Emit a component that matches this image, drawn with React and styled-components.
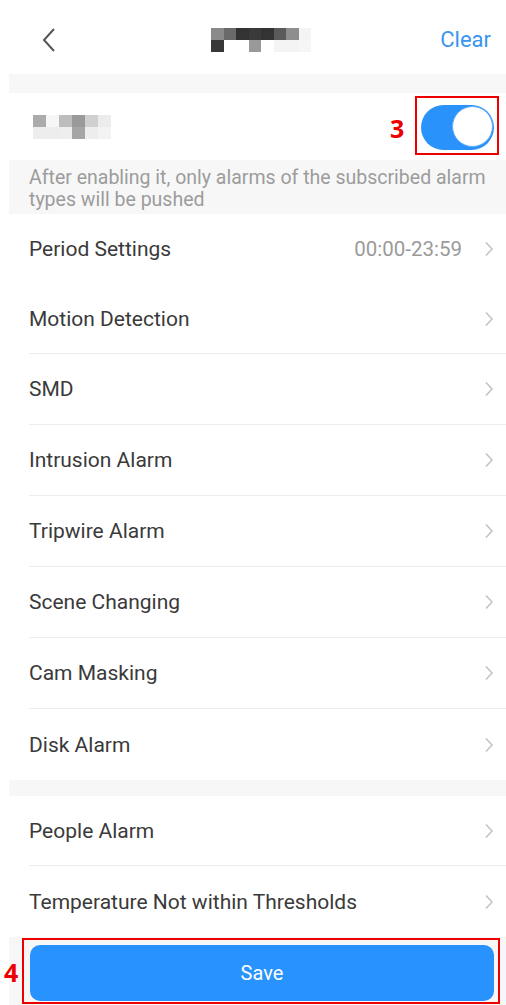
import React from 'react'
import styled, { createGlobalStyle } from 'styled-components'

const Global = createGlobalStyle`
  html, body {
    margin: 0;
    padding: 0;
    background: #ffffff;
    font-family: Roboto, "Noto Sans", sans-serif;
  }
`

const Page = styled.div`
  width: 506px;
  height: 1005px;
  position: relative;
  overflow: hidden;
  background: #fff;
`

const Header = styled.div`
  height: 74px;
  display: flex;
  align-items: center;
  justify-content: space-between;
  padding: 8px 15px 0 42px;
  box-sizing: border-box;
  position: relative;
`

const BackButton = styled.div`
  width: 20px;
  height: 28px;
  display: flex;
  align-items: center;
  margin-top: -2px;
`

const ClearLink = styled.span`
  color: #3a95ee;
  font-size: 22px;
  margin-top: -4px;
`

const Mosaic = styled.div`
  display: grid;
  grid-template-columns: repeat(${p => p.$cols}, ${p => p.$cell}px);
  grid-auto-rows: ${p => p.$row}px;
`

const HeaderMosaic = styled(Mosaic)`
  position: absolute;
  left: 211px;
  top: 28px;
`

const Cell = styled.div`
  background: ${p => p.$c};
`

const Body = styled.div`
  margin-left: 9px;
`

const Gap = styled.div`
  height: ${p => p.$h}px;
  background: #f7f7f7;
`

const ToggleRow = styled.div`
  height: 67px;
  display: flex;
  align-items: center;
  justify-content: space-between;
  padding: 0 12px 0 24px;
  background: #fff;
`

const Toggle = styled.div`
  width: 73px;
  height: 45px;
  border-radius: 23px;
  background: #2a93fb;
  position: relative;
  margin-bottom: -1px;
`

const Knob = styled.div`
  position: absolute;
  right: 1px;
  top: 1px;
  width: 41px;
  height: 41px;
  border-radius: 50%;
  background: #fff;
  border: 1px solid #5aaaf7;
  box-sizing: border-box;
`

const Note = styled.div`
  background: #f7f7f7;
  color: #9c9c9c;
  font-size: 19.5px;
  line-height: 22px;
  padding: 7px 10px 10px 20px;
  height: 54px;
  box-sizing: border-box;
`

const List = styled.div`
  background: #fff;
`

const Row = styled.div`
  height: ${p => p.$h || 71}px;
  display: flex;
  align-items: center;
  margin-left: 20px;
  padding-right: 12px;
  border-bottom: ${p => (p.$line ? '1px solid #ececec' : 'none')};
  box-sizing: border-box;
`

const Label = styled.span`
  flex: 1;
  font-size: 21px;
  color: #3a3a3a;
`

const Value = styled.span`
  font-size: 20.5px;
  color: #9a9a9a;
  margin-right: 22px;
`

const Chevron = styled.svg`
  width: 10px;
  height: 16px;
`

const Footer = styled.div`
  background: #f7f7f7;
  height: 69px;
  padding: 8px 12px 0 21px;
  box-sizing: border-box;
`

const SaveButton = styled.div`
  height: 56px;
  border-radius: 10px;
  background: #2892fe;
  color: #fff;
  font-size: 20px;
  display: flex;
  align-items: center;
  justify-content: center;
`

const Marker = styled.div`
  position: absolute;
  left: ${p => p.$x}px;
  top: ${p => p.$y}px;
  width: ${p => p.$w}px;
  height: ${p => p.$h}px;
  border: 2px solid #ee0000;
  box-sizing: border-box;
`

const MarkerNum = styled.span`
  position: absolute;
  left: ${p => p.$x}px;
  top: ${p => p.$y}px;
  color: #ee0000;
  font-family: "Open Sans", "Liberation Sans", sans-serif;
  font-weight: 700;
  font-size: 25px;
  line-height: 1;
`

const Arrow = () => (
  <Chevron viewBox="0 0 10 16">
    <polyline points="2,1.5 8,8 2,14.5" fill="none" stroke="#c4c4c4" strokeWidth="1.6" />
  </Chevron>
)

const headerCells = [
  '#8a8a8a', '#6a6a6a', '#333', '#3a3a3a', '#333', '#5a5a5a', '#8e8e8e', '#f4f4f4',
  '#383838', '#fff', '#fff', '#999', '#fff', '#f4f4f4', '#f4f4f4', '#f6f6f6'
]

const titleCells = [
  '#ababab', '#f6f6f6', '#bdbdbd', '#9a9a9a', '#d0d0d0', '#ececec',
  '#ededed', '#ededed', '#eeeeee', '#a5a5a5', '#ededed', '#f3f3f3'
]

const rows = [
  { label: 'Period Settings', value: '00:00-23:59', line: false, h: 70 },
  { label: 'Motion Detection', line: true, h: 70 },
  { label: 'SMD', line: true },
  { label: 'Intrusion Alarm', line: true },
  { label: 'Tripwire Alarm', line: true },
  { label: 'Scene Changing', line: true },
  { label: 'Cam Masking', line: true },
  { label: 'Disk Alarm', line: false, h: 71 }
]

const rows2 = [
  { label: 'People Alarm', line: true, h: 70 },
  { label: 'Temperature Not within Thresholds', line: false, h: 71 }
]

export default function App() {
  return (
    <Page>
      <Global />
      <Header>
        <BackButton>
          <svg width="14" height="26" viewBox="0 0 14 26">
            <polyline points="12,2 2,13 12,24" fill="none" stroke="#555" strokeWidth="2" />
          </svg>
        </BackButton>
        <HeaderMosaic $cols={8} $cell={12.5} $row={12}>
          {headerCells.map((c, i) => <Cell key={i} $c={c} />)}
        </HeaderMosaic>
        <ClearLink>Clear</ClearLink>
      </Header>
      <Body>
        <Gap $h={19} />
        <ToggleRow>
          <Mosaic $cols={6} $cell={13} $row={12}>
            {titleCells.map((c, i) => <Cell key={i} $c={c} />)}
          </Mosaic>
          <Toggle>
            <Knob />
          </Toggle>
        </ToggleRow>
        <Note>After enabling it, only alarms of the subscribed alarm types will be pushed</Note>
        <List>
          {rows.map(r => (
            <Row key={r.label} $line={r.line} $h={r.h}>
              <Label>{r.label}</Label>
              {r.value && <Value>{r.value}</Value>}
              <Arrow />
            </Row>
          ))}
        </List>
        <Gap $h={16} />
        <List>
          {rows2.map(r => (
            <Row key={r.label} $line={r.line} $h={r.h}>
              <Label>{r.label}</Label>
              <Arrow />
            </Row>
          ))}
        </List>
        <Footer>
          <SaveButton>Save</SaveButton>
        </Footer>
      </Body>
      <Marker $x={415} $y={96} $w={84} $h={59} />
      <MarkerNum $x={390} $y={116}>3</MarkerNum>
      <Marker $x={22} $y={938} $w={478} $h={66} />
      <MarkerNum $x={4} $y={960}>4</MarkerNum>
    </Page>
  )
}
